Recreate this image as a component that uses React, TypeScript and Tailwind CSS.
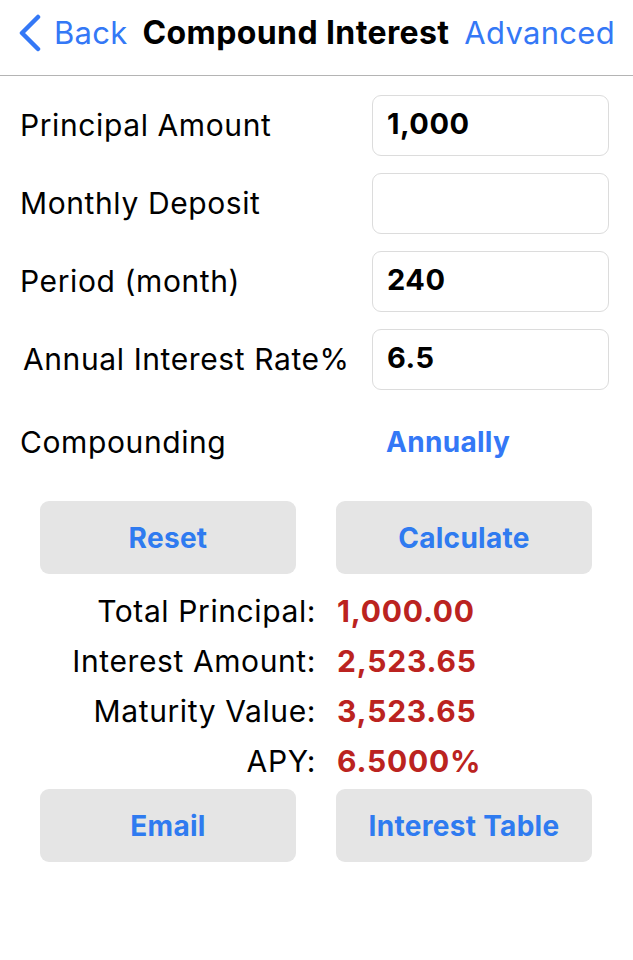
const font = { fontFamily: "Inter, 'Liberation Sans', Arial, sans-serif" };

const fields = [
  { label: "Principal Amount", value: "1,000" },
  { label: "Monthly Deposit", value: "" },
  { label: "Period (month)", value: "240" },
  { label: "Annual Interest Rate%", value: "6.5" },
];

const results = [
  { label: "Total Principal:", value: "1,000.00" },
  { label: "Interest Amount:", value: "2,523.65" },
  { label: "Maturity Value:", value: "3,523.65" },
  { label: "APY:", value: "6.5000%" },
];

function GrayButton({ children }: { children: React.ReactNode }) {
  return (
    <button
      type="button"
      className="flex h-[73px] w-[256px] items-center justify-center rounded-[9px] bg-[#e5e5e5] text-[28px] font-bold tracking-[0.3px] text-[#2f7bf0]"
    >
      {children}
    </button>
  );
}

export default function App() {
  return (
    <div className="h-[960px] w-[633px] bg-white text-black" style={font}>
      {/* nav bar */}
      <div className="flex h-[76px] items-center justify-between border-b border-[#b4b4b4] pb-[10px] pl-[17px] pr-[18px]">
        <div className="flex items-center gap-[13px] text-[#3478f6]">
          <svg width="24" height="38" viewBox="0 0 24 38" fill="none">
            <path d="M21 3 L5 19 L21 35" stroke="#3478f6" strokeWidth="4.5" strokeLinecap="round" strokeLinejoin="round" />
          </svg>
          <span className="text-[31px] leading-none tracking-[0.3px]">Back</span>
        </div>
        <span className="text-[32px] font-bold leading-none tracking-[0.4px]">Compound Interest</span>
        <span className="text-[31px] leading-none tracking-[0.3px] text-[#3478f6]">Advanced</span>
      </div>

      <div className="pt-[19px]">
        {fields.map((f, i) => (
          <div key={f.label} className="mb-[17px] flex h-[61px] items-center pl-[20px] pr-[24px]">
            <span className={"flex-1 text-[30px] tracking-[0.6px] " + (i === 3 ? "pl-[3px]" : "")}>{f.label}</span>
            <div className="flex h-[61px] w-[237px] items-center rounded-[9px] border border-[#dcdcdc] px-[14px] pb-[4px] text-[29px] font-bold tracking-[0.5px]">
              {f.value}
            </div>
          </div>
        ))}

        <div className="flex h-[70px] items-center pl-[20px] pr-[24px]">
          <span className="w-[366px] text-[30px] tracking-[0.6px]">Compounding</span>
          <span className="text-[28px] font-bold tracking-[0.3px] text-[#3478f6]">Annually</span>
        </div>

        <div className="mt-[24px] flex gap-[40px] pl-[40px]">
          <GrayButton>Reset</GrayButton>
          <GrayButton>Calculate</GrayButton>
        </div>

        <div className="mt-[12px] grid grid-cols-[316px_1fr] gap-x-[21px]">
          {results.map((r) => (
            <div key={r.label} className="contents">
              <span className="flex h-[50px] items-center justify-end text-[30px] tracking-[0.6px]">{r.label}</span>
              <span className="flex h-[50px] items-center text-[30px] font-bold tracking-[0.8px] text-[#bb2320]">{r.value}</span>
            </div>
          ))}
        </div>

        <div className="mt-[3px] flex gap-[40px] pl-[40px]">
          <GrayButton>Email</GrayButton>
          <GrayButton>Interest Table</GrayButton>
        </div>
      </div>
    </div>
  );
}
